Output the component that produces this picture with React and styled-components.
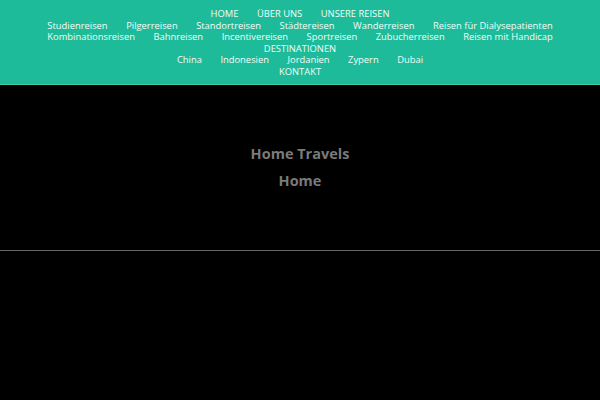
import React from 'react';
import styled, { createGlobalStyle } from 'styled-components';

const GlobalStyle = createGlobalStyle`
  html, body {
    margin: 0;
    padding: 0;
    background: #000;
  }
  body {
    font-family: 'Open Sans', 'Liberation Sans', sans-serif;
  }
`;

const Header = styled.header`
  background-color: #1dbb99;
  padding: 8px 0 7px;
  border-bottom: 1px solid #3fcaa9;
`;

const Row = styled.ul`
  list-style: none;
  margin: 0;
  padding: 0;
  display: flex;
  justify-content: center;
  align-items: center;
  gap: ${(p) => p.gap || 18.5}px;
  height: 11.5px;
`;

const Item = styled.li`
  font-size: 9.4px;
  line-height: 11px;
  color: #f2fbf8;
  white-space: nowrap;
  text-transform: ${(p) => (p.upper ? 'uppercase' : 'none')};
`;

const Hero = styled.section`
  height: 166px;
  display: flex;
  flex-direction: column;
  align-items: center;
  justify-content: center;
  gap: 8px;
  padding-bottom: 1px;
  box-sizing: border-box;
  border-bottom: 1px solid #666;
`;

const Title = styled.h1`
  margin: 0;
  font-size: 14.5px;
  font-weight: 700;
  color: #7a7a7a;
  line-height: 19px;
`;

const Rest = styled.div`
  height: 150px;
`;

const rows = [
  { items: ['HOME', 'ÜBER UNS', 'UNSERE REISEN'], upper: true },
  {
    items: [
      'Studienreisen',
      'Pilgerreisen',
      'Standortreisen',
      'Städtereisen',
      'Wanderreisen',
      'Reisen für Dialysepatienten',
    ],
  },
  {
    items: [
      'Kombinationsreisen',
      'Bahnreisen',
      'Incentivereisen',
      'Sportreisen',
      'Zubucherreisen',
      'Reisen mit Handicap',
    ],
  },
  { items: ['DESTINATIONEN'], upper: true },
  { items: ['China', 'Indonesien', 'Jordanien', 'Zypern', 'Dubai'] },
  { items: ['KONTAKT'], upper: true },
];

export default function App() {
  return (
    <>
      <GlobalStyle />
      <Header>
        <nav>
          {rows.map((row, i) => (
            <Row key={i}>
              {row.items.map((label) => (
                <Item key={label} upper={row.upper}>
                  {label}
                </Item>
              ))}
            </Row>
          ))}
        </nav>
      </Header>
      <Hero>
        <Title>Home Travels</Title>
        <Title>Home</Title>
      </Hero>
      <Rest />
    </>
  );
}
